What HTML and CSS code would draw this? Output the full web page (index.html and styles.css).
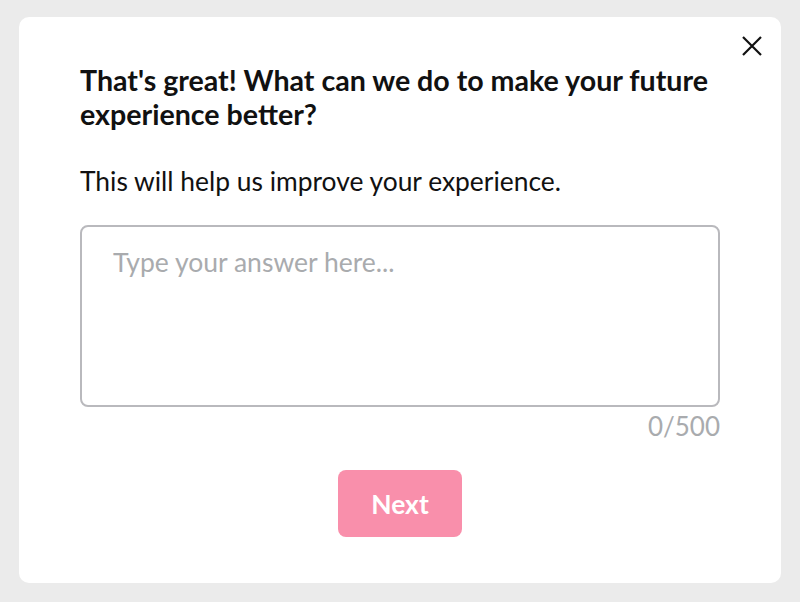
FILE: index.html
```html
<!DOCTYPE html>
<html>
<head>
<meta charset="utf-8">
<link rel="stylesheet" href="styles.css">
</head>
<body>
<div class="card">
  <button class="close" aria-label="Close">
    <svg width="22" height="22" viewBox="0 0 22 22"><path d="M2 2 L20 20 M20 2 L2 20" stroke="#111" stroke-width="2.2" fill="none"/></svg>
  </button>
  <h1 class="title">That's great! What can we do to make your future experience better?</h1>
  <p class="subtitle">This will help us improve your experience.</p>
  <div class="field">
    <textarea class="answer" placeholder="Type your answer here..."></textarea>
    <div class="counter">0/500</div>
  </div>
  <div class="actions">
    <button class="next">Next</button>
  </div>
</div>
</body>
</html>
```
FILE: styles.css
```css
html, body {
  margin: 0;
  padding: 0;
  background: #ebebeb;
  font-family: Lato, "Liberation Sans", sans-serif;
}
body {
  padding: 17px 19px 0 19px;
}
.card {
  position: relative;
  background: #fff;
  border-radius: 10px;
  height: 566px;
  box-sizing: border-box;
  padding: 46px 61px 0 61px;
}
.close {
  position: absolute;
  top: 18px;
  right: 18px;
  background: none;
  border: 0;
  padding: 0;
  width: 22px;
  height: 22px;
  cursor: pointer;
}
.close svg { display: block; }
.title {
  margin: 0;
  font-size: 28.6px;
  line-height: 34px;
  font-weight: 700;
  color: #111;
}
.subtitle {
  margin: 33px 0 0 0;
  font-size: 26.4px;
  line-height: 34px;
  color: #111;
}
.field {
  margin-top: 27px;
}
.answer {
  display: block;
  width: 640px;
  height: 182px;
  box-sizing: border-box;
  border: 2px solid #b9b9bd;
  border-radius: 8px;
  padding: 18px 31px;
  font-family: Lato, "Liberation Sans", sans-serif;
  font-size: 26.5px;
  line-height: 34px;
  resize: none;
  outline: none;
  color: #111;
}
.answer::placeholder {
  color: #a9abae;
}
.counter {
  text-align: right;
  width: 640px;
  font-size: 26px;
  line-height: 30px;
  color: #a9abae;
  margin-top: 4px;
}
.actions {
  display: flex;
  justify-content: center;
  width: 640px;
  margin-top: 29px;
}
.next {
  width: 124px;
  height: 67px;
  border: 0;
  border-radius: 8px;
  background: #f98fab;
  color: #fff;
  font-family: Lato, "Liberation Sans", sans-serif;
  font-weight: 700;
  font-size: 26.4px;
  cursor: pointer;
}
```
